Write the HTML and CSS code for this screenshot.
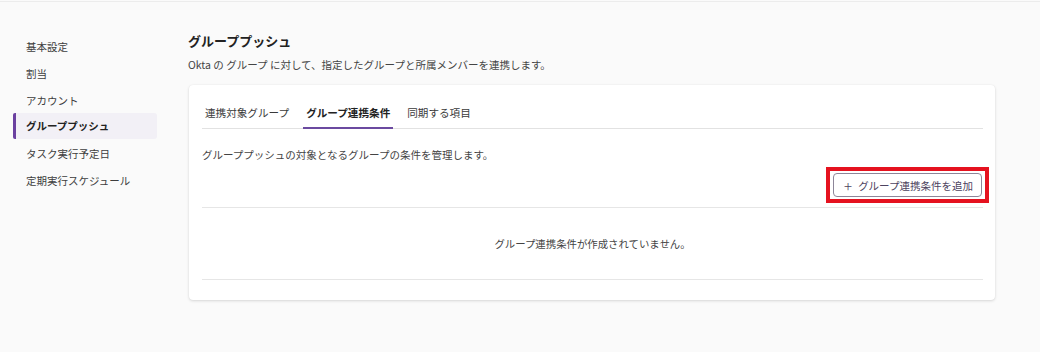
FILE: index.html
```html
<!DOCTYPE html>
<html lang="ja">
<head>
<meta charset="utf-8">
<title>グループプッシュ</title>
<link rel="stylesheet" href="styles.css">
</head>
<body>
<div class="topline"></div>
<div class="page">
  <nav class="sidebar">
    <div class="nav-item">基本設定</div>
    <div class="nav-item">割当</div>
    <div class="nav-item">アカウント</div>
    <div class="nav-item active">グループプッシュ</div>
    <div class="nav-item">タスク実行予定日</div>
    <div class="nav-item">定期実行スケジュール</div>
  </nav>
  <main class="main">
    <h1 class="title">グループプッシュ</h1>
    <p class="lead">Okta の グループ に対して、指定したグループと所属メンバーを連携します。</p>
    <section class="card">
      <div class="tabs">
        <div class="tab">連携対象グループ</div>
        <div class="tab active">グループ連携条件</div>
        <div class="tab">同期する項目</div>
      </div>
      <p class="card-desc">グループプッシュの対象となるグループの条件を管理します。</p>
      <div class="actions">
        <span class="highlight">
          <button class="btn" type="button"><span class="plus">+</span>グループ連携条件を追加</button>
        </span>
      </div>
      <div class="empty">グループ連携条件が作成されていません。</div>
    </section>
  </main>
</div>
</body>
</html>
```

FILE: styles.css
```css
html, body {
  margin: 0;
  padding: 0;
}
body {
  background: #fafafa;
  font-family: "Noto Sans CJK JP", "Noto Sans", sans-serif;
  color: #3a3a3a;
  width: 1040px;
  height: 352px;
  overflow: hidden;
}
.topline {
  height: 1px;
  margin-top: 1px;
  background: #ececec;
}
.page {
  display: flex;
  align-items: flex-start;
}
.sidebar {
  width: 144px;
  margin-left: 13px;
  padding-top: 31px;
  display: flex;
  flex-direction: column;
}
.nav-item {
  height: 27px;
  line-height: 27px;
  font-size: 10.5px;
  color: #3d3d3d;
  padding-left: 13px;
}
.nav-item.active {
  height: 26px;
  line-height: 26px;
  margin-top: -1px;
  margin-bottom: 1px;
  padding-left: 10px;
  border-left: 3px solid #6b40a0;
  border-radius: 2px 3px 3px 2px;
  background: #f2f0f6;
  font-weight: 700;
  color: #222;
}
.main {
  margin-left: 31px;
  width: 807px;
  padding-top: 30px;
}
.title {
  margin: 0;
  font-size: 13px;
  line-height: 18px;
  font-weight: 700;
  color: #222;
}
.lead {
  margin: 7px 0 0;
  font-size: 10.5px;
  line-height: 16px;
  color: #444;
}
.card {
  margin: 12px 0 0 1px;
  width: 806px;
  box-sizing: border-box;
  background: #fff;
  border-radius: 4px;
  box-shadow: 0 1px 3px rgba(0,0,0,0.14), 0 0 1px rgba(0,0,0,0.08);
  padding: 0 12px 20px 13px;
}
.tabs {
  display: flex;
  gap: 11px;
  border-bottom: 1px solid #e2e2e2;
}
.tab {
  padding: 20px 3px 6px;
  font-size: 10.6px;
  line-height: 16px;
  color: #3a3a3a;
  border-bottom: 2px solid transparent;
  margin-bottom: -1px;
}
.tab.active {
  font-weight: 700;
  color: #222;
  border-bottom-color: #6b4aa0;
}
.card-desc {
  margin: 18px 0 0;
  font-size: 10.5px;
  line-height: 16px;
  color: #444;
}
.actions {
  display: flex;
  justify-content: flex-end;
  padding: 10px 1px 10px 0;
  border-bottom: 1px solid #e6e6e6;
}
.highlight {
  display: flex;
  border: 4px solid #e5121f;
  padding: 2px 3px;
  margin: -6px -7px -6px 0;
}
.btn {
  height: 24px;
  box-sizing: border-box;
  padding: 0 8px 0 10px;
  background: #fff;
  border: 1px solid #8d8699;
  border-radius: 4px;
  font-family: inherit;
  font-size: 10.5px;
  color: #4d4360;
  display: flex;
  align-items: center;
  gap: 6px;
}
.plus {
  font-size: 15px;
  line-height: 1;
  font-weight: 300;
}
.empty {
  height: 71px;
  display: flex;
  align-items: center;
  justify-content: center;
  font-size: 10.4px;
  color: #444;
  border-bottom: 1px solid #e6e6e6;
}
```
